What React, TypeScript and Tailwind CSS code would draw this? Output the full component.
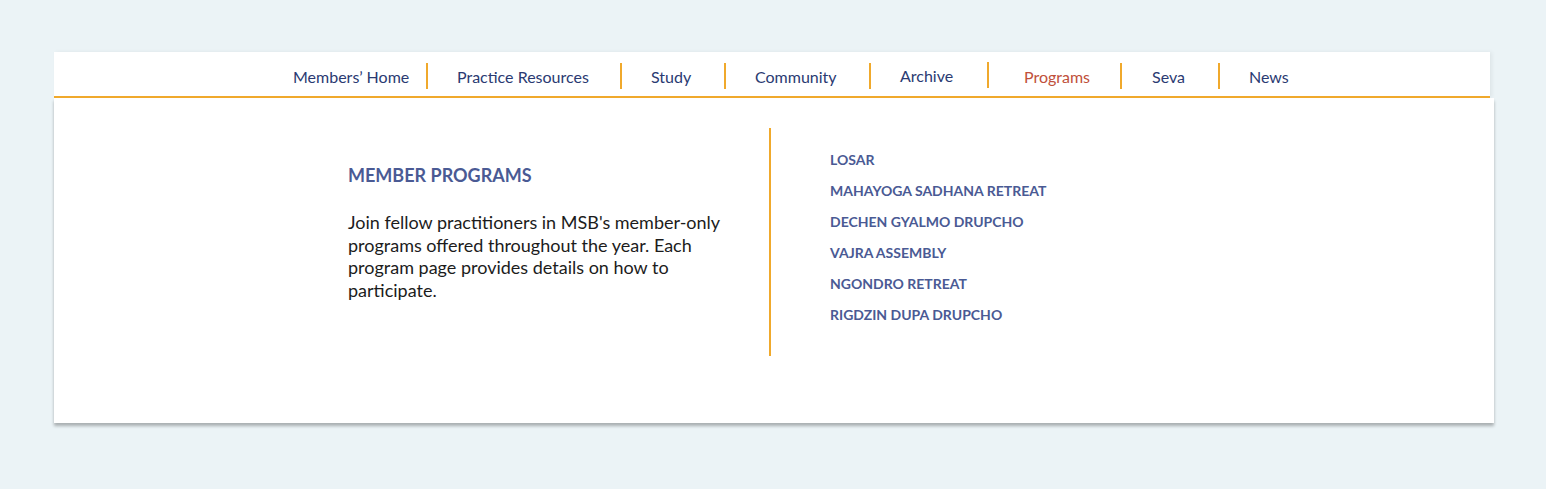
import React from 'react';

const navItems = [
  { label: 'Members\u2019 Home', cls: 'w-[135px]', sep: true },
  { label: 'Practice Resources', cls: 'w-[194px] pl-[29px]', sep: true },
  { label: 'Study', cls: 'w-[104px] pl-[29px]', sep: true },
  { label: 'Community', cls: 'w-[145px] pl-[29px]', sep: true },
  { label: 'Archive', cls: 'w-[118px] pl-[29px] -translate-y-[1px]', sep: true },
  { label: 'Programs', cls: 'w-[133px] pl-[35px]', sep: true, active: true },
  { label: 'Seva', cls: 'w-[98px] pl-[30px]', sep: true },
  { label: 'News', cls: 'pl-[29px]', sep: false },
];

const programs = [
  'LOSAR',
  'MAHAYOGA SADHANA RETREAT',
  'DECHEN GYALMO DRUPCHO',
  'VAJRA ASSEMBLY',
  'NGONDRO RETREAT',
  'RIGDZIN DUPA DRUPCHO',
];

export default function App() {
  return (
    <div className="min-h-[489px] bg-[#ebf3f6] pt-[52px] pl-[54px] font-['Lato','Liberation_Sans',sans-serif]">
      <nav className="w-[1436px] h-[46px] pt-[4px] bg-white border-b-2 border-[#f0a92c] shadow-[2px_0_4px_rgba(0,0,0,0.06)] flex items-center pl-[239px]">
        {navItems.map((item) => (
          <div
            key={item.label}
            className={`h-[26px] flex items-center text-[16px] ${item.sep ? 'border-r-2 border-[#f0a92c]' : ''} ${item.cls} ${item.active ? 'text-[#c0503a]' : 'text-[#2a3a72]'}`}
          >
            <span className="translate-y-[1px]">{item.label}</span>
          </div>
        ))}
      </nav>
      <div className="w-[1440px] h-[325px] bg-white shadow-[0_3px_3px_rgba(0,0,0,0.28)] flex pt-[30px] pl-[294px]">
        <div className="w-[421px] pt-[35px]">
          <h2 className="text-[18px] leading-[24px] font-bold text-[#4a5a94]">MEMBER PROGRAMS</h2>
          <p className="mt-[24px] w-[385px] text-[18px] leading-[22.5px] text-[#1c1c1c]">
            Join fellow practitioners in MSB's member-only programs offered throughout the year. Each program page provides details on how to participate.
          </p>
        </div>
        <div className="h-[228px] border-l-2 border-[#f0a92c]" />
        <ul className="pl-[59px] pt-[23px] flex flex-col gap-[14px]">
          {programs.map((p) => (
            <li key={p} className="text-[14px] leading-[17px] font-bold text-[#4a5a94]">
              {p}
            </li>
          ))}
        </ul>
      </div>
    </div>
  );
}
